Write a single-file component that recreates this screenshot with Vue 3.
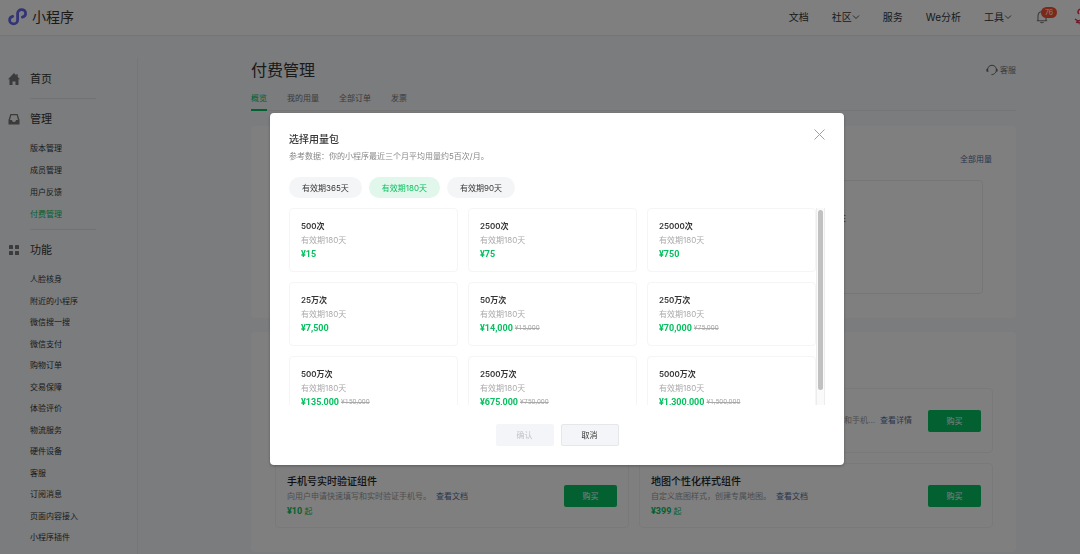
<script setup>
import { ref } from 'vue'

const manage = ['版本管理', '成员管理', '用户反馈', '付费管理']
const features = ['人脸核身', '附近的小程序', '微信搜一搜', '微信支付', '购物订单', '交易保障', '体验评价', '物流服务', '硬件设备', '客服', '订阅消息', '页面内容接入', '小程序插件']
const nav = [
  { label: '文档' },
  { label: '社区', menu: true },
  { label: '服务' },
  { label: 'We分析' },
  { label: '工具', menu: true }
]
const tabs = ['概览', '我的用量', '全部订单', '发票']
const products = [
  { title: '手机号实时验证组件', desc: '向用户申请快速填写和实时验证手机号。', price: '¥10' },
  { title: '地图个性化样式组件', desc: '自定义底图样式，创建专属地图。', price: '¥399' }
]
const periods = ['有效期365天', '有效期180天', '有效期90天']
const period = ref(1)
const packs = [
  { count: '500次', price: '¥15' },
  { count: '2500次', price: '¥75' },
  { count: '25000次', price: '¥750' },
  { count: '25万次', price: '¥7,500' },
  { count: '50万次', price: '¥14,000', old: '¥15,000' },
  { count: '250万次', price: '¥70,000', old: '¥75,000' },
  { count: '500万次', price: '¥135,000', old: '¥150,000' },
  { count: '2500万次', price: '¥675,000', old: '¥750,000' },
  { count: '5000万次', price: '¥1,300,000', old: '¥1,500,000' }
]
</script>

<template>
  <div class="page">
    <header class="top">
      <a class="brand" href="#">
        <svg width="20" height="18" viewBox="0 0 20 18" fill="none" stroke="#6467f0" stroke-width="2.8" stroke-linecap="round">
          <path d="M4.700 8.400C2.800 8.900 1.600 10.100 1.600 12c0 2.400 1.800 3.900 4 3.900s4-1.600 4-4V5.600C9.600 3.200 11.400 1.600 13.600 1.600s4 1.500 4 3.800c0 1.900-1.200 3.200-3.200 3.700" />
        </svg>
        <span>小程序</span>
      </a>
      <nav class="nav">
        <a v-for="n in nav" :key="n.label" href="#">
          {{ n.label }}
          <svg v-if="n.menu" width="8" height="6" viewBox="0 0 8 6" fill="none" stroke="#555" stroke-width="1"><path d="M1 1.500l3 3 3-3" /></svg>
        </a>
      </nav>
      <button class="bell" aria-label="通知">
        <svg width="12" height="14" viewBox="0 0 12 14" fill="none" stroke="#777" stroke-width="1.100"><path d="M.8 10.700h10.400M2 10.500V6.200C2 3.500 3.700 1.700 6 1.700s4 1.800 4 4.500v4.300M4.500 12c.6.900 2.400.9 3 0" /></svg>
        <span class="badge">76</span>
      </button>
      <a class="avatar" href="#" aria-label="账号">
        <svg width="24" height="20" viewBox="0 0 24 20" fill="none" stroke="#e0304e" stroke-width="1.500"><path d="M8 2C4 2 3 5 5 7M1 12l3 2 4-1M2 15l4 1M6 18l2-2" /></svg>
      </a>
    </header>

    <div class="body">
      <aside class="side">
        <a class="group" href="#">
          <svg width="12" height="12" viewBox="0 0 12 12" fill="#777"><path d="M6 0L0 6.300h1.500V12h3V8.500h3V12h3V6.300H12L9.700 3.900V1.200H8.300v1.200z" /></svg>
          首页
        </a>
        <hr />
        <a class="group" href="#">
          <svg width="12" height="12" viewBox="0 0 12 12"><path d="M2.400 1h7.200L11.500 7v4.500H.5V7z" fill="#777" /><path d="M3.300 2.200h5.400L10 7H8c0 1.100-.8 2-2 2S4 8.100 4 7H2z" fill="#f7f8fa" /></svg>
          管理
        </a>
        <ul>
          <li v-for="m in manage" :key="m"><a href="#" :class="{ on: m === '付费管理' }">{{ m }}</a></li>
        </ul>
        <hr />
        <a class="group" href="#">
          <svg width="12" height="12" viewBox="0 0 12 12" fill="#777"><rect x="1" y="1" width="4" height="4" rx=".6" /><rect x="7" y="1" width="4" height="4" rx=".6" /><rect x="1" y="7" width="4" height="4" rx=".6" /><rect x="7" y="7" width="4" height="4" rx=".6" /></svg>
          功能
        </a>
        <ul class="fill">
          <li v-for="f in features" :key="f"><a href="#">{{ f }}</a></li>
        </ul>
      </aside>

      <main class="main">
        <div class="heading">
          <h1>付费管理</h1>
          <a class="help" href="#">
            <svg width="12" height="12" viewBox="0 0 12 12" fill="none" stroke="#666" stroke-width="1"><path d="M2 7.800C.8 4 3 1.300 6 1.300S11.200 4 10 7.800C9.300 9.300 8 10.300 6.300 10.500" /><path d="M1.200 5v2.500M10.800 5v2.500" stroke-width="1.600" /><circle cx="6" cy="10.600" r=".7" fill="#666" stroke="none" /></svg>
            客服
          </a>
        </div>
        <div class="tabs">
          <a v-for="(t, i) in tabs" :key="t" href="#" :class="{ on: i === 0 }">{{ t }}</a>
        </div>

        <section class="panel usage">
          <a class="link" href="#">全部用量</a>
          <div class="box">注</div>
        </section>

        <section class="panel goods">
          <article class="item second">
            <div class="info">
              <p><span>快速验证用户填写的手机号码，支持获取和手机...</span><a class="link" href="#">查看详情</a></p>
            </div>
            <button class="buy">购买</button>
          </article>
          <article v-for="p in products" :key="p.title" class="item">
            <div class="info">
              <h3>{{ p.title }}</h3>
              <p>{{ p.desc }}<a class="link" href="#">查看文档</a></p>
              <div class="from"><b>{{ p.price }}</b> 起</div>
            </div>
            <button class="buy">购买</button>
          </article>
        </section>
      </main>
    </div>

    <div class="mask">
      <div class="dialog" role="dialog" aria-labelledby="dialog-title">
        <button class="close" aria-label="关闭">
          <svg width="11" height="11" viewBox="0 0 11 11" stroke="#a0a0a0" stroke-width="1"><path d="M.5.5l10 10M10.500.5l-10 10" /></svg>
        </button>
        <h2 id="dialog-title">选择用量包</h2>
        <p class="note">参考数据：你的小程序最近三个月平均用量约5百次/月。</p>
        <div class="pills">
          <button v-for="(p, i) in periods" :key="p" :class="{ on: i === period }" @click="period = i">{{ p }}</button>
        </div>
        <div class="scroller">
          <div class="grid">
            <button v-for="p in packs" :key="p.count" class="pack">
              <strong>{{ p.count }}</strong>
              <small>有效期180天</small>
              <span class="price"><b>{{ p.price }}</b><s v-if="p.old">{{ p.old }}</s></span>
            </button>
          </div>
          <div class="track"><div class="thumb"></div></div>
        </div>
        <div class="actions">
          <button disabled>确认</button>
          <button>取消</button>
        </div>
      </div>
    </div>
  </div>
</template>

<style>
body {
  margin: 0;
  overflow: hidden;
}
</style>

<style scoped>
.page {
  min-height: 100vh;
  overflow: hidden;
  background: #f7f8fa;
  color: #353535;
  font: 8px/16px Inter, "Noto Sans CJK SC", sans-serif;
}
* {
  box-sizing: border-box;
}
a {
  color: inherit;
  text-decoration: none;
}
button {
  padding: 0;
  border: 0;
  background: none;
  color: inherit;
  font: inherit;
}
h1, h2, h3, p, ul {
  margin: 0;
  padding: 0;
}
svg {
  display: block;
  flex: none;
}
.top {
  display: flex;
  align-items: center;
  height: 36px;
  padding-left: 8px;
  padding-bottom: 2px;
  background: #fff;
  border-bottom: 1px solid #e8e8e8;
}
.brand {
  display: flex;
  align-items: center;
  gap: 4px;
  font-size: 14px;
}
.nav {
  display: flex;
  gap: 23px;
  margin-left: auto;
  font-size: 10px;
}
.nav a {
  display: flex;
  align-items: center;
}
.bell {
  position: relative;
  margin: 0 26px 0 24px;
}
.badge {
  position: absolute;
  left: 5px;
  top: -3px;
  width: 16px;
  border-radius: 6px;
  background: #fa5130;
  color: #fff;
  font-size: 7px;
  line-height: 11px;
  text-align: center;
}
.avatar {
  width: 6px;
  overflow: hidden;
}
.body {
  display: flex;
}
.side {
  display: flex;
  flex-direction: column;
  width: 138px;
  height: calc(100vh - 58px);
  margin-top: 22px;
  padding: 10px 0 7px 8px;
  border-right: 1px solid #eceded;
}
.group {
  display: flex;
  align-items: center;
  gap: 10px;
  font-size: 11px;
  line-height: 22px;
}
hr {
  width: 66px;
  height: 1px;
  margin: 8px 0 9px 22px;
  border: 0;
  background: #e4e5e7;
}
.side ul {
  margin: 7px 0 0 22px;
  list-style: none;
}
.side li {
  line-height: 22px;
}
.side ul + hr {
  margin-top: 4px;
}
.side .fill {
  display: flex;
  flex: 1;
  flex-direction: column;
  justify-content: space-between;
  margin-top: 8px;
}
.side .fill li {
  line-height: 20px;
}
.on {
  color: #07c160;
}
.main {
  flex: 1;
  padding: 22px 64px 0 113px;
}
.heading {
  display: flex;
  align-items: center;
  justify-content: space-between;
  height: 24px;
}
h1 {
  font-size: 16px;
  font-weight: 400;
}
.help {
  display: flex;
  align-items: center;
  gap: 2px;
  color: #777;
}
.tabs {
  display: flex;
  gap: 20px;
  margin-bottom: 15px;
  border-bottom: 1px solid #eaebed;
  color: #777;
}
.tabs a {
  margin-bottom: -1px;
  padding: 8px 0 3px;
  border-bottom: 2px solid transparent;
}
.tabs .on {
  border-color: #07c160;
  color: #07c160;
}
.panel {
  border-radius: 4px;
  background: #fff;
}
.usage {
  display: flex;
  flex-direction: column;
  align-items: flex-end;
  padding: 25px 24px 24px;
}
.usage .box {
  align-self: stretch;
  height: 114px;
  margin: 13px 9px 0;
  padding: 29px 136px 0 0;
  border: 1px solid #ededee;
  border-radius: 4px;
  text-align: right;
}
.link {
  color: #576b95;
}
.goods {
  display: grid;
  grid-template-columns: 1fr 1fr;
  gap: 10px;
  margin-top: 14px;
  padding: 56px 23px 24px 24px;
}
.item {
  display: flex;
  align-items: center;
  justify-content: space-between;
  height: 65px;
  padding: 0 11px;
  border: 1px solid #f3f3f4;
  border-radius: 4px;
}
.second {
  grid-column: 2;
}
.info {
  line-height: 15px;
  color: #9a9a9a;
}
.info .link {
  margin-left: 5px;
}
.second .info {
  flex: 1;
  padding-right: 16px;
  text-align: right;
}
.info h3 {
  color: #222;
  font-size: 10px;
  font-weight: 500;
  line-height: 15px;
}
.from {
  color: #07c160;
  line-height: 14px;
}
b {
  font: 700 9px/14px Roboto, sans-serif;
}
.buy {
  width: 53px;
  height: 22px;
  border-radius: 2px;
  background: #07c160;
  color: #fff;
}
.mask {
  position: fixed;
  inset: 0;
  display: flex;
  align-items: center;
  justify-content: center;
  padding: 24px 0 0 34px;
  background: rgba(0, 0, 0, 0.5);
}
.dialog {
  position: relative;
  width: 574px;
  padding: 17px 19px 19px;
  border-radius: 4px;
  background: #fff;
  box-shadow: 0 1px 3px rgba(0, 0, 0, 0.3);
}
.close {
  position: absolute;
  top: 16px;
  right: 19px;
}
h2 {
  font-size: 10px;
  font-weight: 500;
  line-height: 18px;
}
.note {
  color: #888;
}
.pills {
  display: flex;
  gap: 7px;
  margin: 13px 0 10px;
}
.pills button {
  height: 21px;
  padding: 0 13px;
  border-radius: 11px;
  background: #f4f5f7;
}
.pills .on {
  background: #e1f7eb;
  color: #07c160;
}
.scroller {
  display: flex;
  height: 197px;
  overflow: hidden;
}
.grid {
  display: grid;
  flex: 1;
  grid-template-columns: repeat(3, 1fr);
  grid-auto-rows: 64px;
  gap: 10px;
}
.pack {
  display: flex;
  flex-direction: column;
  padding: 10px 11px;
  border: 1px solid #f5f5f5;
  border-radius: 4px;
  line-height: 14px;
  text-align: left;
}
.pack strong {
  font-weight: 600;
}
.pack small {
  color: #aaa;
  font-size: 8px;
}
.price {
  display: flex;
  gap: 2px;
  color: #07c160;
}
.price s {
  color: #aaa;
  font: 7px/14px Roboto, sans-serif;
}
.track {
  width: 9px;
  padding: 2px 1px;
  border: solid #ededed;
  border-width: 0 1px;
  background: #fafafa;
}
.thumb {
  width: 5px;
  height: 180px;
  border-radius: 3px;
  background: #c1c1c1;
}
.actions {
  display: flex;
  justify-content: center;
  gap: 7px;
  margin-top: 19px;
}
.actions button {
  width: 58px;
  height: 22px;
  border: 1px solid #e5e7ea;
  border-radius: 2px;
  background: #f4f5f8;
}
.actions button:disabled {
  border-color: #f4f5f8;
  color: #c4c5c7;
}
</style>
